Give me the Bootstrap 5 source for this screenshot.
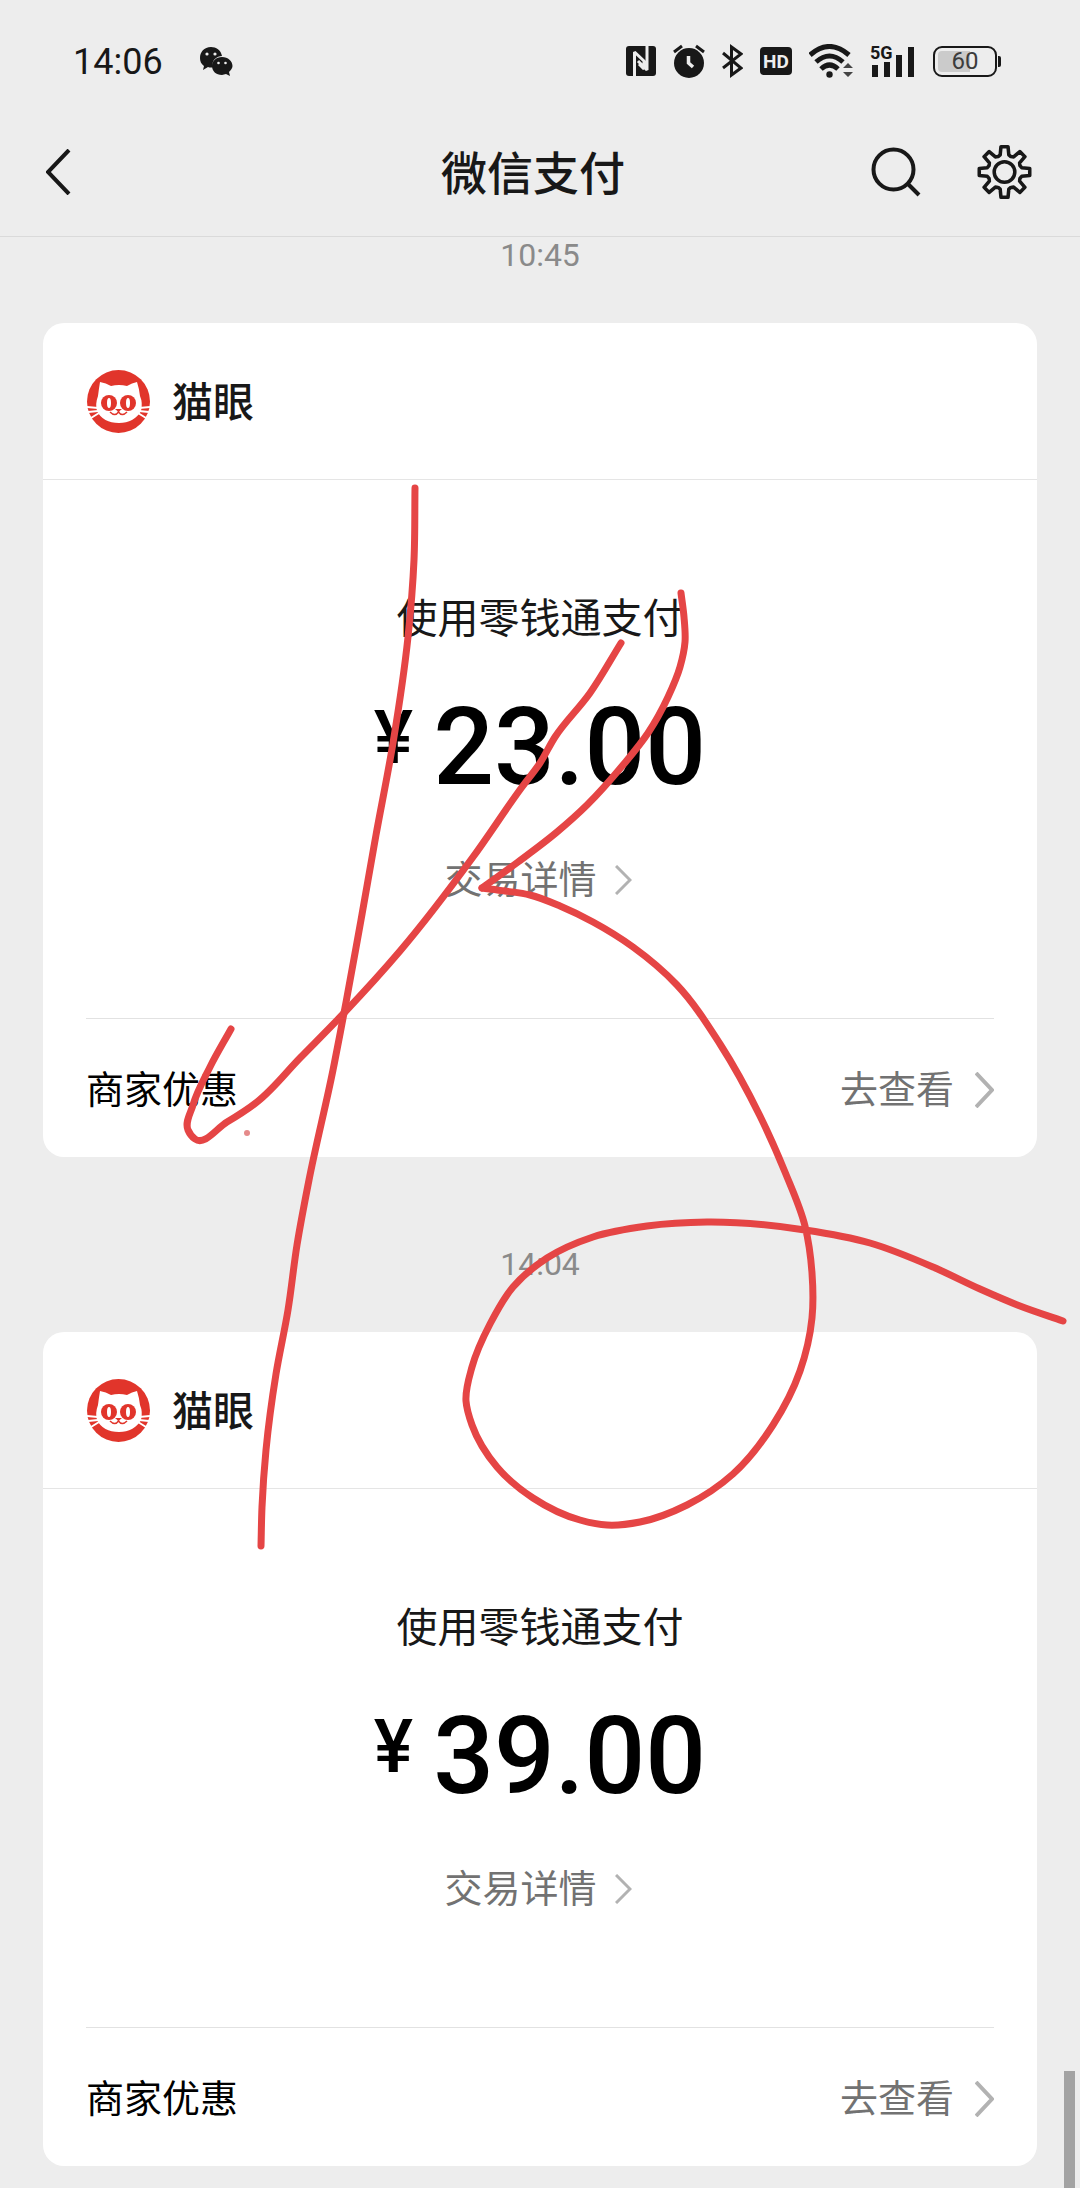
<!DOCTYPE html>
<html lang="zh-CN">
<head>
<meta charset="utf-8">
<meta name="viewport" content="width=device-width, initial-scale=1">
<title>微信支付</title>
<link href="https://cdn.jsdelivr.net/npm/bootstrap@5.3.0/dist/css/bootstrap.min.css" rel="stylesheet">
<style>
  body { background: #ededed; color: #181818; font-family: Roboto, "Noto Sans CJK SC", sans-serif; }
  svg { display: block; flex: none; }
  .status-bar { height: 108px; padding: 14px 79px 0 73px; }
  .clock { font-size: 36px; line-height: 42px; padding-top: 2px; }
  .chat-icon { margin-left: 36px; }
  .status-icons { gap: 17px; }
  .battery { width: 64px; height: 31px; border: 2px solid #181818; border-radius: 9px; font-size: 24px; line-height: 27px; color: #3c3c3c;
    background: linear-gradient(90deg, #cbcbcb 60%, transparent 60%) content-box; padding: 3px; }
  .battery span { margin: -3px 0; }
  .battery-tip { width: 3px; height: 11px; background: #181818; border-radius: 0 2px 2px 0; margin-left: 1px; }
  .title-bar { height: 129px; border-bottom: 1px solid #dadada; padding-right: 48px; }
  .title-bar h1 { font-size: 46px; line-height: 60px; font-weight: 500; padding-top: 3px; }
  .icon-btn { background: none; border: 0; padding: 0; color: #181818; }
  .back-btn { width: 195px; padding-left: 46px; }
  .tool-btns { gap: 56px; }
  .time-stamp { font-size: 32px; line-height: 37px; color: #8a8a8a; text-align: center; }
  .time-next { margin-top: 89px; }
  .pay-card { margin: 49px 43px 0; background: #fff; border-radius: 21px; }
  .pay-head { height: 157px; padding-left: 44px; border-bottom: 1px solid #e5e5e5; gap: 22px; }
  .pay-head h2 { font-size: 41px; line-height: 60px; font-weight: 500; padding-top: 4px; }
  .pay-body { padding: 109px 0 113px; }
  .pay-method { font-size: 41px; line-height: 60px; }
  .pay-sum { font-size: 107px; line-height: 108px; font-weight: 500; color: #000; margin: 45px 0 53px; gap: 20px; }
  .pay-sum span { font-size: 74px; line-height: 88px; }
  .pay-link { font-size: 38px; line-height: 50px; color: #727272; text-decoration: none; gap: 18px; }
  .detail-link { padding-right: 4px; }
  .pay-foot { height: 139px; margin: 0 43px 0 43px; padding-top: 4px; border-top: 1px solid #e2e2e2; font-size: 38px; line-height: 50px; color: #000; }
  .go-link { gap: 21px; }
  .ink-layer { left: 0; top: 0; width: 100%; pointer-events: none; }
  .scroll-thumb { right: 5px; bottom: 0; width: 11px; height: 119px; background: #a3a3a3; }
</style>
<script src="https://cdn.jsdelivr.net/npm/bootstrap@5.3.0/dist/js/bootstrap.bundle.min.js"></script>
</head>
<body>
<svg width="0" height="0" class="position-absolute" aria-hidden="true">
  <symbol id="cat" viewBox="0 0 63 63">
    <circle cx="31.500" cy="31.500" r="31.500" fill="#e1352b"/>
    <path fill="#fff" d="M13 12Q19 13 24 16Q32 14 40 16Q45 13 50 12Q52 18 53 26Q56 33 54 41Q47 53 32 53Q16 53 10 41Q8 34 11 26Q12 18 13 12Z"/>
    <g stroke="#fff" stroke-width="2"><path d="M0 37L11 38M1 42L11 41M4 48L12 43M63 37L52 38M62 42L52 41M59 48L51 43"/></g>
    <circle cx="22" cy="33" r="8" fill="#e1352b"/><circle cx="41" cy="33" r="8" fill="#e1352b"/>
    <ellipse cx="22" cy="33" rx="2" ry="5" fill="#fff"/><ellipse cx="41" cy="33" rx="2" ry="5" fill="#fff"/>
    <path fill="#e1352b" d="M28 39H35L31.500 42Z"/>
    <path fill="none" stroke="#e1352b" stroke-width="1.500" d="M31.500 40V42Q28 47 23 42M31.500 42Q35 47 40 42"/>
  </symbol>
</svg>

<div class="position-relative overflow-hidden pb-4">
  <header>
    <div class="status-bar d-flex align-items-center">
      <span class="clock">14:06</span>
      <svg class="chat-icon" width="34" height="30" viewBox="0 0 34 30" fill="#181818">
        <path d="M12 1C5 1 1 6 1 12C1 15 2 18 5 20L4 24L9 21Q12 22 14 21C12 14 18 10 23 10C22 4 17 1 12 1Z"/>
        <path d="M23 11C17 11 13 15 13 20C13 25 17 29 23 29L27 28L31 30L30 26C32 24 33.500 22 33.500 20C33.500 15 29 11 23 11Z"/>
        <g fill="#ededed"><circle cx="8" cy="8" r="1.600"/><circle cx="16" cy="8" r="1.600"/><circle cx="19.500" cy="17" r="1.300"/><circle cx="26.500" cy="17" r="1.300"/></g>
      </svg>
      <div class="status-icons d-flex align-items-center ms-auto">
        <svg width="30" height="30" viewBox="0 0 30 30"><rect width="30" height="30" rx="3" fill="#181818"/><path fill="none" stroke="#ededed" stroke-width="3" stroke-linejoin="bevel" d="M8.500 30V6L18 15V23L13 18M21 0V24L12 15"/></svg>
        <svg width="32" height="34" viewBox="0 0 32 34"><circle cx="16" cy="19" r="15" fill="#181818"/><path stroke="#181818" stroke-width="3" d="M1 8L9 2M31 8L23 2"/><path fill="none" stroke="#ededed" stroke-width="3.500" d="M15.500 12V19L20 23"/></svg>
        <svg width="21" height="34" viewBox="0 0 21 34"><path fill="none" stroke="#181818" stroke-width="3" d="M1 9L19 24L9.500 31V3L19 10L1 24"/></svg>
        <svg width="32" height="28" viewBox="0 0 32 28"><rect width="32" height="28" rx="4" fill="#181818"/><text x="16" y="21" text-anchor="middle" font-size="19" font-weight="700" fill="#ededed" font-family="Roboto, sans-serif">HD</text></svg>
        <svg width="44" height="34" viewBox="0 0 44 34"><g fill="none" stroke="#181818" stroke-width="5"><path d="M1 11Q20.500 -6 40 11M7 18Q20.500 6 34 18M12 25Q20.500 17 29 25"/></g><circle cx="20.500" cy="30.500" r="3.200" fill="#181818"/><path fill="#444" d="M34 24L39 19L44 24ZM34 28L39 33L44 28Z"/></svg>
        <svg width="46" height="36" viewBox="0 -2 46 36"><text x="0" y="14" font-size="18" font-weight="700" fill="#181818" font-family="Roboto, sans-serif">5G</text><path stroke="#181818" stroke-width="6" d="M5 20V32M17 17V32M29 10V32M41 2V32"/></svg>
        <div class="d-flex align-items-center"><div class="battery d-flex justify-content-center"><span>60</span></div><i class="battery-tip"></i></div>
      </div>
    </div>
    <nav class="title-bar d-flex align-items-center" aria-label="标题栏">
      <button class="icon-btn back-btn" type="button" aria-label="返回"><svg width="26" height="46" viewBox="0 0 26 46"><path fill="none" stroke="currentColor" stroke-width="4" d="M23 1L2 23L23 45"/></svg></button>
      <h1 class="flex-grow-1 text-center mb-0">微信支付</h1>
      <div class="tool-btns d-flex align-items-center">
        <button class="icon-btn" type="button" aria-label="搜索"><svg width="50" height="50" viewBox="0 0 50 50" fill="none" stroke="currentColor" stroke-width="4"><circle cx="22.500" cy="22.500" r="20"/><path d="M37 37L48 48"/></svg></button>
        <button class="icon-btn" type="button" aria-label="设置"><svg width="55" height="56" viewBox="-28 -28 56 56" fill="none" stroke="currentColor" stroke-width="3.600" stroke-linejoin="round"><circle r="10.500"/><path id="gear"/></svg></button>
      </div>
    </nav>
  </header>

  <main>
    <div class="time-stamp">10:45</div>
    <section class="pay-card">
      <div class="pay-head d-flex align-items-center"><svg width="63" height="63"><use href="#cat"/></svg><h2 class="mb-0">猫眼</h2></div>
      <div class="pay-body d-flex flex-column align-items-center">
        <div class="pay-method">使用零钱通支付</div>
        <div class="pay-sum d-flex"><span>¥</span>23.00</div>
        <a href="#" class="pay-link detail-link d-flex align-items-center">交易详情<svg width="17" height="30" viewBox="0 0 17 30"><path fill="none" stroke="#b2b2b2" stroke-width="3" d="M1 1L15 15L1 29"/></svg></a>
      </div>
      <div class="pay-foot d-flex align-items-center justify-content-between">商家优惠
        <a href="#" class="pay-link go-link d-flex align-items-center">去查看<svg width="19" height="36" viewBox="0 0 19 36"><path fill="none" stroke="#b2b2b2" stroke-width="4" d="M1 1L17 18L1 35"/></svg></a></div>
    </section>

    <div class="time-stamp time-next">14:04</div>
    <section class="pay-card">
      <div class="pay-head d-flex align-items-center"><svg width="63" height="63"><use href="#cat"/></svg><h2 class="mb-0">猫眼</h2></div>
      <div class="pay-body d-flex flex-column align-items-center">
        <div class="pay-method">使用零钱通支付</div>
        <div class="pay-sum d-flex"><span>¥</span>39.00</div>
        <a href="#" class="pay-link detail-link d-flex align-items-center">交易详情<svg width="17" height="30" viewBox="0 0 17 30"><path fill="none" stroke="#b2b2b2" stroke-width="3" d="M1 1L15 15L1 29"/></svg></a>
      </div>
      <div class="pay-foot d-flex align-items-center justify-content-between">商家优惠
        <a href="#" class="pay-link go-link d-flex align-items-center">去查看<svg width="19" height="36" viewBox="0 0 19 36"><path fill="none" stroke="#b2b2b2" stroke-width="4" d="M1 1L17 18L1 35"/></svg></a></div>
    </section>
  </main>

  <svg class="ink-layer position-absolute" viewBox="0 0 1080 2188" aria-hidden="true">
    <g id="ink" fill="none" stroke="#e54545" stroke-width="7" stroke-linecap="round" stroke-linejoin="round"></g>
    <circle cx="247" cy="1133" r="3" fill="#e58a8a"/>
  </svg>
  <div class="scroll-thumb position-absolute"></div>
</div>
<script>
  // Freehand pen strokes: each is a list of x,y samples joined by a smooth curve.
  const strokes = [
    [415,488, 414,560, 408,637, 393,743, 376,835, 361,920, 344,1013, 333,1070, 309,1180, 297,1245, 288,1310, 276,1374, 266,1450, 262,1507, 261,1546],
    [621,643, 590,693, 555,737, 540,763, 522,787, 473,857, 400,951, 344,1013, 300,1058, 257,1102, 227,1122, 195,1139, 188,1130, 193,1105, 210,1067, 231,1029],
    [681,593, 684,617, 685,642, 680,667, 668,697, 648,733, 623,765, 587,805, 557,832, 518,862, 482,888],
    [482,888, 505,891, 530,895, 560,906, 593,922, 633,947, 677,985, 720,1044, 760,1116, 785,1172, 805,1226, 812,1273, 812,1318, 800,1371, 773,1425, 733,1474, 687,1505, 640,1522, 607,1525, 580,1520, 533,1498, 497,1467, 472,1425, 466,1401, 472,1367, 490,1324, 513,1287, 547,1258, 593,1237, 647,1226, 707,1222, 805,1230, 870,1243, 933,1267, 980,1289, 1020,1306, 1063,1321]
  ];
  const ns = "http://www.w3.org/2000/svg";
  const dist = (a, b) => Math.hypot(b[0] - a[0], b[1] - a[1]);
  // Unit direction at b; the shorter neighbouring segment counts more.
  function heading(a, b, c) {
    const p = dist(a, b), q = dist(b, c);
    if (!p || !q) return [(c[0] - a[0]) / (p + q), (c[1] - a[1]) / (p + q)];
    const v = [0, 1].map(i => (b[i] - a[i]) / p * q + (c[i] - b[i]) / q * p), l = Math.hypot(v[0], v[1]);
    return [v[0] / l, v[1] / l];
  }
  for (const s of strokes) {
    const n = s.length / 2, p = i => { i = Math.max(0, Math.min(n - 1, i)); return [s[2 * i], s[2 * i + 1]]; };
    let d = "M" + p(0);
    for (let i = 0; i < n - 1; i++) {
      const b = p(i), c = p(i + 1), k = dist(b, c) / 3;
      const h = heading(p(i - 1), b, c), t = heading(b, c, p(i + 2));
      d += "C" + [b[0] + h[0] * k, b[1] + h[1] * k, c[0] - t[0] * k, c[1] - t[1] * k, c[0], c[1]];
    }
    const path = document.createElementNS(ns, "path");
    path.setAttribute("d", d);
    document.getElementById("ink").append(path);
  }
  // Eight-tooth gear outline: five polar points for every tooth.
  const g = [];
  for (let t = 0; t < 8; t++) for (const [off, r] of [[-22.5, 17], [-14, 18], [-8, 26], [8, 26], [14, 18]]) {
    const a = (t * 45 + off) * Math.PI / 180;
    g.push((r * Math.sin(a)).toFixed(1) + " " + (-r * Math.cos(a)).toFixed(1));
  }
  document.getElementById("gear").setAttribute("d", "M" + g.join("L") + "Z");
</script>
</body>
</html>
